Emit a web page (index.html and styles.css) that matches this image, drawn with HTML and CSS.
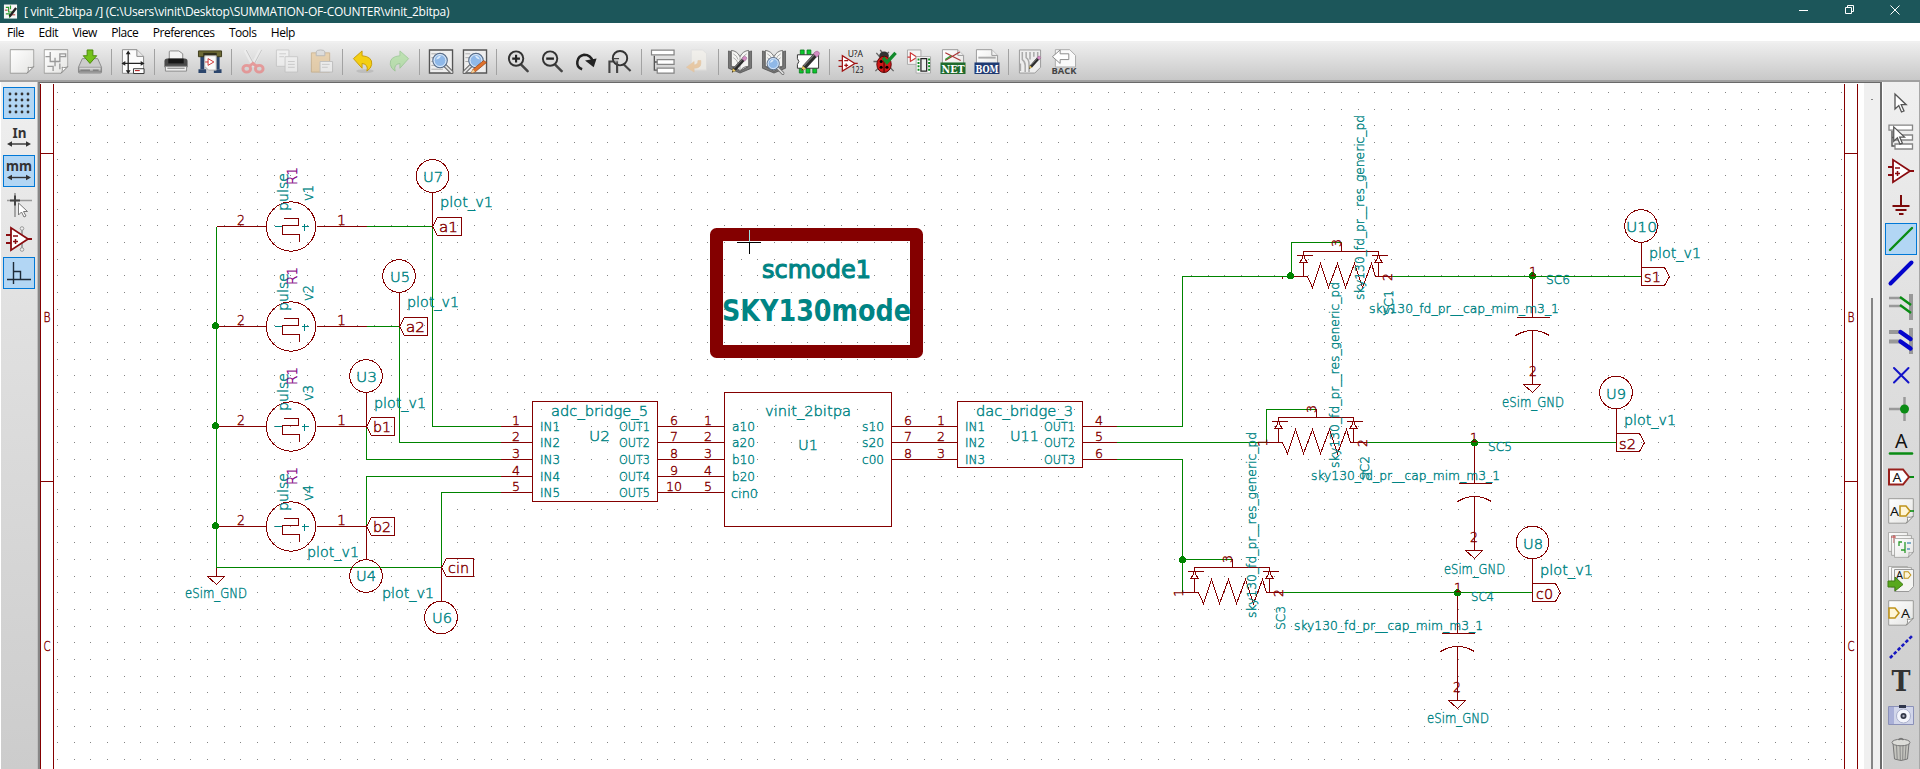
FILE: index.html
```html
<!DOCTYPE html>
<html lang="en">
<head>
<meta charset="utf-8">
<title>vinit_2bitpa</title>
<link rel="stylesheet" href="styles.css">
</head>
<body>
<svg class="defs" aria-hidden="true">
  <defs>
    <linearGradient id="paper" x1="0" y1="0" x2="1" y2="1"><stop offset="0" stop-color="#fff"/><stop offset="1" stop-color="#e4e4e2"/></linearGradient>
    <linearGradient id="metal" x1="0" y1="0" x2="0" y2="1"><stop offset="0" stop-color="#eee"/><stop offset="1" stop-color="#8c8c8c"/></linearGradient>
    <symbol id="page" viewBox="0 0 26 26"><path d="M.7.7h24.6v17.5l-7 7H.7z" fill="url(#paper)" stroke="#9a9a98"/><path d="M18.3 25.2c1.5-2 1.500-4 1-6.200 2 .6 4 .4 6-.8z" fill="#fff" stroke="#8c8c8a"/></symbol>
    <symbol id="sheet" viewBox="0 0 26 26"><path d="M2 .7h16l6 6v18.600H2z" fill="url(#paper)" stroke="#999"/><path d="M18 .7v6h6" fill="#eee" stroke="#999"/></symbol>
    <symbol id="pencil" viewBox="0 0 26 26"><path d="M3.500 24.500l1.500-6L20 2l4 3.500L9 22z" fill="#2d2d2d"/><path d="M6.500 18.500L20 4" stroke="#777" stroke-width="1.500"/><path d="M3.500 24.500l1.500-6 4 3.500z" fill="#e8c65c"/><path d="M3.500 24.500l.8-2.500 1.500 1.400z" fill="#222"/><path d="M17.800 4.500L20 2q2-1.500 4 .5t-.5 4l-2 2z" fill="#d48cc4" stroke="#96648c" stroke-width=".6"/></symbol>
    <symbol id="lens" viewBox="0 0 26 26"><path d="M17 17l7 7" stroke="#666" stroke-width="4" stroke-linecap="round"/><path d="M17 17l7 7" stroke="#ddd" stroke-width="2" stroke-linecap="round"/><circle cx="12" cy="12" r="7.500" fill="#8fb8e8" stroke="#5b6e88" stroke-width="1.200"/><circle cx="12" cy="12" r="6.200" fill="none" stroke="#e7f0fa"/><path d="M8 11q1-4 5-4-1 3-5 4z" fill="#dcebfb"/></symbol>
    <symbol id="opamp" viewBox="0 0 26 26"><g stroke="#8a0c10" stroke-width="1.800" fill="none"><path d="M0 9h5M0 17h5M21 13h5"/><path d="M5 1.800v22.400L22 13z" fill="#fff"/><path d="M7 10h5M7 15.500h5M9.500 13v5" stroke-width="1.500"/></g></symbol>
    <symbol id="book" viewBox="0 0 26 26"><path d="M1 2v18l12 5 12-5V2l-3 1v15l-9 5-9-5V3z" fill="#777" stroke="#444" stroke-width=".7"/><path d="M4 1.500Q10 2 13 8q3-6 9-6.500v16.500Q16 18 13 23q-3-5-9-5z" fill="#f4f4f2" stroke="#555" stroke-width=".8"/><path d="M13 8v15M6 5q4 2 5 6M6 9q4 2 5 6M20 5q-4 2-5 6M20 9q-4 2-5 6" fill="none" stroke="#999" stroke-width=".8"/></symbol>
    <symbol id="tree" viewBox="0 0 26 26"><path d="M4 7v15h5M4 13.500h5" fill="none" stroke="#555" stroke-width="1.400"/><g fill="#fff" stroke="#858585" stroke-width="1.300"><path d="M1 1.200h23.500v5H1zM7 11h17.500v5H7zM7 20h17.500v5H7z"/></g></symbol>
    <symbol id="arrow" viewBox="0 0 26 26"><path d="M7 4v15l3.800-3.500 2.700 6.500 2.500-1-2.800-6.300h5z" fill="#fff" stroke="#555" stroke-width="1.300"/></symbol>
    <symbol id="tag" viewBox="0 0 12 12"><path d="M1 1h6l4 5-4 5H1z" fill="#fff6d8" stroke="#c0941c" stroke-width="1.600"/></symbol>
  </defs>
</svg>
<header class="titlebar">
  <svg class="app-icon" viewBox="0 0 16 16"><path d="M1 0h14v15H1z" fill="#f6f6f6"/><path d="M3 3h3v5h4M8 1v4M3 10h4v4" stroke="#2a9a2a" stroke-width="1.200" fill="none"/><path d="M2 6h3M9 11h4" stroke="#a22"/><path d="M6 12L13 3l2 1.500-7 9z" fill="#222"/></svg>
  <span class="title">[ vinit_2bitpa /] (C:\Users\vinit\Desktop\SUMMATION-OF-COUNTER\vinit_2bitpa)</span>
  <svg class="controls" viewBox="0 0 138 23"><g fill="none" stroke="#fff"><path d="M16 10.500h9"/><path d="M62.500 7.500h6v6h-6zM64.500 7.500v-2h6v6h-2"/><path d="M107.500 5.500l9 9M116.500 5.500l-9 9"/></g></svg>
</header>
<nav class="menu"><span>File</span><span>Edit</span><span>View</span><span>Place</span><span>Preferences</span><span>Tools</span><span>Help</span></nav>
<div class="toolbar">
  <svg class="ico" viewBox="0 0 26 26"><use href="#page"/></svg>
  <svg class="ico" viewBox="0 0 26 26"><use href="#page"/><path d="M2 8h5v5h5M7 3v5M12 9v9M12 13h5v-5M17 8h6v-3h-6zM4 18h6v5M17 15v6" fill="none" stroke="#999" stroke-width="1.400"/></svg>
  <svg class="ico" viewBox="0 0 26 26"><path d="M5 10h16l4 9v5q0 1-1 1H2q-1 0-1-1v-5z" fill="#ccc" stroke="#8a8a8a"/><path d="M1.500 19h23v5h-23z" fill="url(#metal)" stroke="#808080" stroke-width=".7"/><path d="M3 22h10M16 22h6" stroke="#666"/><path d="M10 1h6v6h4l-7 8-7-8h4z" fill="#73c21a" stroke="#4c8a0a"/></svg>
  <i class="sep"></i>
  <svg class="ico" viewBox="0 0 26 26"><path d="M2 .7h15l7 7v17.600H2z" fill="#fcfcfc" stroke="#888"/><path d="M17 .7v7h7" fill="#e8e8e8" stroke="#888"/><path d="M8 4v20M3 15h20" stroke="#222" stroke-width="1.300"/><path d="M8 1.500l2.500 4h-5zM8 26l2.500-4h-5zM1 15l4-2.500v5zM25 15l-4-2.500v5z" fill="#222"/><path d="M13.500 20.500h11v5h-11z" fill="#fff" stroke="#333"/><path d="M15 22.500h5" stroke="#a00"/></svg>
  <i class="sep"></i>
  <svg class="ico" viewBox="0 0 26 26"><path d="M6 11V3q0-1 1-1h9l4 3v6z" fill="#f2f2f2" stroke="#888"/><path d="M4 10h18q3 0 3 3v6H1v-6q0-3 3-3z" fill="#4a4a4a"/><path d="M5 10h16v5H5z" fill="#171717"/><path d="M2 18h22v5H2z" fill="#eee" stroke="#888"/><path d="M4 20h18" stroke="#777"/></svg>
  <svg class="ico" viewBox="0 0 26 26"><path d="M3 7h4v14H3zM19 7h4v14h-4z" fill="#2b456c"/><path d="M1 21h8v4H1zM17 21h8v4h-8z" fill="#2b456c"/><path d="M1 2h24v6H1z" fill="#6d6a35" stroke="#3d3b1c"/><path d="M6 4h14v4H6z" fill="#302f1c"/><path d="M7.500 7h12v15h-8l-4-4z" fill="#fafafa" stroke="#aaa"/><path d="M11 10v7l6-3.500zM8 13.500h3" fill="#fff" stroke="#c33"/></svg>
  <i class="sep"></i>
  <svg class="ico dim" viewBox="0 0 26 26"><path d="M5 1l9 17M21 1l-9 17" stroke="#f4f4f4" stroke-width="4"/><path d="M6 1l9 17M22 1l-9 17" stroke="#aaa" stroke-width="1"/><g fill="none" stroke="#f06a6a" stroke-width="3"><ellipse cx="6.500" cy="20.500" rx="4" ry="3.500"/><ellipse cx="19.500" cy="20.500" rx="4" ry="3.500"/><path d="M9 18l4-3 4 3"/></g></svg>
  <svg class="ico dim" viewBox="0 0 26 26"><g fill="#fafafa" stroke="#b8b8b8"><path d="M2 1h13v17H2z"/><path d="M11 8h13v16H11z"/></g><path d="M5 5h7M5 8h5M14 13h7M14 16h7M14 19h7" stroke="#bbb"/></svg>
  <svg class="ico dim" viewBox="0 0 26 26"><path d="M3 4h19v20H3z" fill="#ecc488" stroke="#bd965c"/><path d="M8 3q0-2 4.500-2T17 3v4H8z" fill="#d8d8d8" stroke="#999"/><path d="M12 13h13v11H12z" fill="#fafafa" stroke="#aaa"/><path d="M14 16h8M14 19h6" stroke="#bbb"/></svg>
  <i class="sep"></i>
  <svg class="ico" viewBox="0 0 26 26"><ellipse cx="14" cy="23" rx="9" ry="2" fill="#aaa" opacity=".5"/><path d="M2 10l9-8v5q11 1 10 9-.5 4-5 7 2-7-5-8v5z" fill="#f4cf12" stroke="#c79c08"/></svg>
  <svg class="ico dim" viewBox="0 0 26 26"><path d="M24 10l-9-8v5Q4 8 5 16q.5 4 5 7-2-7 5-8v5z" fill="#9fe08b" stroke="#74bb68"/></svg>
  <i class="sep"></i>
  <svg class="ico" viewBox="0 0 26 26"><path d="M1 1h24v24H1z" fill="#eee" stroke="#555" stroke-width="1.400"/><path d="M3 5h5M3 9h4M3 13h4M3 17h5M3 21h12" stroke="#aaa"/><use href="#lens"/></svg>
  <svg class="ico" viewBox="0 0 26 26"><path d="M1 1h24v24H1z" fill="#eee" stroke="#555" stroke-width="1.400"/><path d="M3 5h5M3 9h4M3 13h4" stroke="#aaa"/><g transform="matrix(-1 0 0 1 26 0)"><use href="#lens"/></g><path d="M9 25l2-4L22 12l3 2-12 10z" fill="#e0722c" stroke="#8d3c10" stroke-width=".7"/><path d="M9 25l2-4 2 3z" fill="#f0d9a0"/></svg>
  <i class="sep"></i>
  <svg class="ico" viewBox="0 0 26 26"><path d="M15 15l8 8" stroke="#444" stroke-width="2.600" stroke-linecap="round"/><circle cx="11" cy="10" r="7.500" fill="#ddd" stroke="#333" stroke-width="2"/><path d="M7 10h8M11 6v8" stroke="#222" stroke-width="2.200"/></svg>
  <svg class="ico" viewBox="0 0 26 26"><path d="M15 15l8 8" stroke="#444" stroke-width="2.600" stroke-linecap="round"/><circle cx="11" cy="10" r="7.500" fill="#ddd" stroke="#333" stroke-width="2"/><path d="M7 10h8" stroke="#222" stroke-width="2.400"/></svg>
  <svg class="ico" viewBox="0 0 26 26"><path d="M9 21Q3 19 4 13t7-7q7 0 9 7" fill="none" stroke="#222" stroke-width="2.600"/><path d="M12 12l12-2-3 9z" fill="#222"/></svg>
  <svg class="ico" viewBox="0 0 26 26"><path d="M2 25V13h8v12M17 16l7 7" stroke="#444" stroke-width="2.200" fill="none"/><circle cx="13" cy="9.500" r="7.500" fill="#ddd" fill-opacity=".6" stroke="#333" stroke-width="2"/><path d="M10 13v10M6 10h6" stroke="#444" stroke-width="1.500"/></svg>
  <i class="sep"></i>
  <svg class="ico" viewBox="0 0 26 26"><use href="#tree"/></svg>
  <svg class="ico dim" viewBox="0 0 26 26"><path d="M7 1h12l4 4v17H7z" fill="#fbf8f0" stroke="#ddd"/><path d="M17 12v3q0 5-7 5v4l-8-5 8-6v3.500q4 0 4-4.500z" fill="#f5bd7c" stroke="#e8b880" stroke-width=".6"/></svg>
  <i class="sep"></i>
  <svg class="ico" viewBox="0 0 26 26"><use href="#book"/><use href="#pencil" x="2" y="6" width="19" height="20"/></svg>
  <svg class="ico" viewBox="0 0 26 26"><use href="#book"/><use href="#lens" x="2" y="5" width="22" height="22"/></svg>
  <svg class="ico" viewBox="0 0 26 26"><path d="M5 1h4v6H5zM12 1h4v6h-4zM4 19h4v6H4zM11 19h4v6h-4zM18 19h4v6h-4z" fill="#0cc52c" stroke="#087a1c" stroke-width=".8"/><path d="M2 6h22v14H2v-4q3-3 0-6z" fill="#fff" stroke="#333"/><use href="#pencil" x="3" y="0" width="23" height="25"/></svg>
  <i class="sep"></i>
  <svg class="ico" viewBox="0 0 26 26"><g fill="none" stroke="#a11414" stroke-width="1.300"><path d="M0 12h4M0 18h4M17 15h3"/><path d="M4 7v16l13-8z" fill="#fff"/><path d="M6 12h4M6 17h4M8 15v4"/></g><text class="ann" x="9.500" y="8.500" textLength="16" lengthAdjust="spacingAndGlyphs">U?A</text><text class="ann" x="13.500" y="25" textLength="12.500" lengthAdjust="spacingAndGlyphs">123</text></svg>
  <svg class="ico" viewBox="0 0 26 26"><path d="M4 4l5 6M1 13h7M3 23l5-5M17 3l-4 5M22 23l-5-5M8 1l3 4" stroke="#666" stroke-width="1.400"/><ellipse cx="12" cy="7" rx="5" ry="4.500" fill="#333"/><ellipse cx="12" cy="16" rx="7.500" ry="8.500" fill="#d01818" stroke="#5c0606"/><path d="M12 8v16" stroke="#300"/><circle cx="9" cy="13" r="1.600"/><circle cx="15" cy="19" r="1.600"/><circle cx="9" cy="19" r="1.600"/><path d="M11 9l4 5 9-10" fill="none" stroke="#138a2c" stroke-width="3.500"/></svg>
  <svg class="ico" viewBox="0 0 26 26"><path d="M1 1h14v15H1z" fill="#f4f4f4" stroke="#aaa"/><path d="M4 4v9l7-4.500zM1 8.500h3M11 8.500h4" fill="#fff" stroke="#c33" stroke-width="1.200"/><path d="M10 8h15v17H10z" fill="#fff" stroke="#aaa"/><path d="M15 10h6v13h-6z" fill="#eee" stroke="#222" stroke-width="1.300"/><path d="M12.500 10v13M23.500 10v13" stroke="#0a8a1c" stroke-width="2" stroke-dasharray="2 1.500"/></svg>
  <svg class="ico" viewBox="0 0 26 26"><use href="#sheet"/><path d="M5 4l16 8M5 12l15-9" stroke="#a33" stroke-width="1.200"/><path d="M5 11l6-4" stroke="#393" stroke-width="1.500"/><path d="M0 14h26v12H0z" fill="#1f6a2c"/><text class="tile" x="1" y="24.500" textLength="24" lengthAdjust="spacingAndGlyphs">NET</text></svg>
  <svg class="ico" viewBox="0 0 26 26"><use href="#sheet"/><path d="M4 9h18" stroke="#aaa" stroke-width="2"/><path d="M0 14h26v12H0z" fill="#1f3a72"/><text class="tile" x="1" y="24.500" textLength="24" lengthAdjust="spacingAndGlyphs">BOM</text></svg>
  <i class="sep"></i>
  <svg class="ico" viewBox="0 0 26 26"><path d="M2 1h22v18l-6 6H2z" fill="#eee" stroke="#999"/><path d="M5 3v8q3 2 3 6v7M9 3v6q3 2 3 7v8M3 15v8M13 3v8M17 3v5M21 3v5" fill="none" stroke="#aaa" stroke-width="1.600"/><use href="#pencil" x="10" y="5" width="15" height="18"/></svg>
  <svg class="ico" viewBox="0 0 26 26"><path d="M4 .7h15l6 6v12H4z" fill="#fafafa" stroke="#aaa"/><path d="M1 8l8-7v4h9v6H9v4z" fill="#fff" stroke="#888"/><text class="back" x="0" y="26" textLength="26" lengthAdjust="spacingAndGlyphs">BACK</text></svg>
</div>
<div class="work">
  <aside class="side left">
    <svg class="btn on" viewBox="0 0 26 26"><path d="M4 4h0M10 4h0M16 4h0M22 4h0M4 10h0M10 10h0M16 10h0M22 10h0M4 16h0M10 16h0M16 16h0M22 16h0M4 22h0M10 22h0M16 22h0M22 22h0" stroke="#333" stroke-width="2.800" stroke-linecap="round"/></svg>
    <svg class="btn" viewBox="0 0 26 26"><text class="unit" x="6.500" y="14" textLength="14" lengthAdjust="spacingAndGlyphs">In</text><path d="M3 20h20" stroke="#333" stroke-width="1.400"/><path d="M1 20l5-2.700v5.400zM25 20l-5-2.700v5.400z" fill="#333"/></svg>
    <svg class="btn on" viewBox="0 0 26 26"><text class="unit" x="0" y="12.500" textLength="26" lengthAdjust="spacingAndGlyphs">mm</text><path d="M3 19.500h20" stroke="#333" stroke-width="1.400"/><path d="M1 19.500l5-2.700v5.400zM25 19.500l-5-2.700v5.400z" fill="#333"/></svg>
    <svg class="btn" viewBox="0 0 26 26"><path d="M1 8.500h25M9 1v24" stroke="#999" stroke-width="1.700"/><path d="M4 8.500h10M9 3.500v10" stroke="#444" stroke-width="2"/><path d="M12.500 11v12l3-3 2.500 5 2-1-2.500-4.500h4z" fill="#fff" stroke="#777"/></svg>
    <svg class="btn" viewBox="0 0 26 26"><path d="M16 3v20" stroke="#999" stroke-width="1.800"/><circle cx="16" cy="2.500" r="1.800" fill="#eee" stroke="#999"/><circle cx="16" cy="23.500" r="1.800" fill="#eee" stroke="#999"/><use href="#opamp"/></svg>
    <svg class="btn on" viewBox="0 0 26 26"><path d="M7.500 2v22M1 19.500h24M7.500 11.500h7v8" fill="none" stroke="#1e2b38" stroke-width="1.400"/></svg>
  </aside>
  <main class="canvas">
    <svg id="schematic" class="sheet" viewBox="40 83 1824 686">
      <defs>
        <g id="source"><circle cx="-.5" r="24.700"/><path d="M-75 0h50M25 0h50M-8-7l1-1H7V-1H-9V8H8V15"/><path class="teal" d="M-17 0h7M10 0h7M13-3v7"/></g>
        <g id="ground"><path d="M-9 0H8L0 8z"/></g>
        <g id="resistor"><path d="M0 0h16l5 11 8-24 8 24 9-24 8 24 9-24 8 24 9-24 4 13h16M12 0v-14M12-21v-4h75v4M87-14V0M50-25v-9M5-21h16M80-21h16M8-14h8l-3-4v-3h-2v3zM83-14h8l-3-4v-3h-2v3z"/></g>
        <g id="capacitor"><path d="M0 0v41M-16 41h33M-17 59Q0 49 17 59M0 54v54"/><use href="#ground" y="108"/></g>
      </defs>
      <path id="grid" class="dots"/>
      <g class="lines" transform="translate(.5 .5)">
        <path d="M40 83v686M53 83v686M40 153h13M40 481h13M1844 83v686M1857 83v686M1844 153h13M1844 481h13"/>
        <g class="wire">
          <path d="M216 226v341h225M366 226h66v200h68M366 326h33v116h101M366 426v33h134M366 526v-50h134M441 567v-75h59"/>
          <path d="M1116 426h66V276h109v-34h50M1116 442h150v-33h50M1116 459h66v133M1182 559h50M1391 276h250M1366 442h250M1282 592h250"/>
        </g>
        <use href="#source" x="291" y="226"/><use href="#source" x="291" y="326"/><use href="#source" x="291" y="426"/><use href="#source" x="291" y="526"/>
        <path d="M216 567v9"/><use href="#ground" x="216" y="576"/>
        <g>
          <circle cx="432" cy="175.500" r="16.300"/><circle cx="398.500" cy="275.500" r="16.300"/><circle cx="365.500" cy="375.500" r="16.300"/><circle cx="365.500" cy="575.500" r="16.300"/><circle cx="440.500" cy="617" r="16.300"/>
          <circle cx="1640.500" cy="225.500" r="16.300"/><circle cx="1615.500" cy="392" r="16.300"/><circle cx="1532" cy="542" r="16.300"/>
          <path d="M432 192v34M399 292v34M366 392v34M366 526v33M441 567v34M1641 242v25M1616 408v25M1532 558v25"/>
          <path d="M432 226l5-9h24v18h-24zM399 326l5-9h23v18h-23zM366 426l5-9h23v18h-23zM366 526l5-9h23v18h-23zM441 567l5-9h27v18h-27z"/>
          <path d="M1641 267h23l5 9-5 9h-23zM1616 433h23l5 9-5 9h-23zM1532 583h23l5 9-5 9h-23z"/>
        </g>
        <path d="M532 401h125v100H532zM724 392h167v134H724zM957 401h125v66H957z"/>
        <path d="M500 426h32M500 442h32M500 459h32M500 476h32M500 492h32M657 426h67M657 442h67M657 459h67M657 476h67M657 492h67M891 426h66M891 442h66M891 459h66M1082 426h34M1082 442h34M1082 459h34"/>
        <use href="#resistor" x="1291" y="276"/><use href="#resistor" x="1266" y="442"/><use href="#resistor" x="1182" y="592"/>
        <path d="M1282 276v2"/>
        <use href="#capacitor" x="1532" y="276"/><use href="#capacitor" x="1474" y="442"/><use href="#capacitor" x="1457" y="592"/>
        <g class="dot"><circle cx="215" cy="325" r="3.500"/><circle cx="215" cy="425" r="3.500"/><circle cx="215" cy="525" r="3.500"/><circle cx="1290" cy="275" r="3.500"/><circle cx="1532" cy="275" r="3.500"/><circle cx="1474" cy="442" r="3.500"/><circle cx="1457" cy="592" r="3.500"/><circle cx="1182" cy="559" r="3.500"/></g>
      </g>
      <rect class="frame" x="716.500" y="234.500" width="200" height="117"/>
      <g class="lines"><path class="cursor" d="M737 242.500h24M749.500 243v11"/><path class="cursor-inv" d="M749.500 230v12"/></g>
      <g id="labels"></g>
    </svg>
    <div class="scroll"><i class="scroll-cap"></i><i class="thumb"></i></div>
  </main>
  <aside class="side right">
    <svg class="btn" viewBox="0 0 26 26"><use href="#arrow"/></svg>
    <svg class="btn" viewBox="0 0 26 26"><use href="#tree"/><use href="#arrow" y="-1" x="-1" width="25" height="25"/></svg>
    <svg class="btn" viewBox="0 0 26 26"><use href="#opamp"/></svg>
    <svg class="btn" viewBox="0 0 26 26"><path d="M13 3v11M4.500 14h17M7.500 18h11M11 22h4.500" stroke="#7c0a0a" stroke-width="2"/></svg>
    <svg class="btn on" viewBox="0 0 26 26"><path d="M2 24L24 2" stroke="#0a8c14" stroke-width="2.400" stroke-linecap="round"/></svg>
    <svg class="btn" viewBox="0 0 26 26"><path d="M2.500 23.500l21-21" stroke="#0404cc" stroke-width="4" stroke-linecap="round"/></svg>
    <svg class="btn" viewBox="0 0 26 26"><path d="M23 0v26" stroke="#999" stroke-width="4"/><path d="M1 4h12M1 12h12" stroke="#999" stroke-width="2.500"/><path d="M12 3l11 8M12 11l11 8" stroke="#0a8c14" stroke-width="2.400"/></svg>
    <svg class="btn" viewBox="0 0 26 26"><path d="M23 0v26" stroke="#999" stroke-width="4"/><path d="M1 4h12M1 13.500h12" stroke="#999" stroke-width="4"/><path d="M12.500 4l10 7M12.500 13.500l10 7" stroke="#0404cc" stroke-width="4.400" stroke-linecap="round"/></svg>
    <svg class="btn" viewBox="0 0 26 26"><path d="M6 6l14.500 14.500M20.500 6L6 20.500" stroke="#1414c8" stroke-width="2" stroke-linecap="round"/></svg>
    <svg class="btn" viewBox="0 0 26 26"><path d="M1 13h15M16.500 1v24" stroke="#999" stroke-width="2.500"/><circle cx="16.500" cy="13" r="4.500" fill="#0a8c14"/></svg>
    <svg class="btn" viewBox="0 0 26 26"><text class="glyph" x="7" y="17.500" textLength="12.500" lengthAdjust="spacingAndGlyphs">A</text><path d="M2 23.500h22" stroke="#0a8c14" stroke-width="2.600" stroke-linecap="round"/></svg>
    <svg class="btn" viewBox="0 0 26 26"><path d="M20 13h6" stroke="#0a8c14" stroke-width="2"/><path d="M1 5.500h14l6 7.500-6 7.500H1z" fill="#fff" stroke="#98201c" stroke-width="2"/><text class="glyph small" x="4.500" y="18" textLength="9" lengthAdjust="spacingAndGlyphs">A</text></svg>
    <svg class="btn" viewBox="0 0 26 26"><use href="#page"/><text class="glyph small" x="2" y="17.500" textLength="9" lengthAdjust="spacingAndGlyphs">A</text><use href="#tag" x="11" y="7" width="12" height="12"/><path d="M22 13h4" stroke="#0a8c14" stroke-width="1.600"/></svg>
    <svg class="btn" viewBox="0 0 26 26"><use href="#page" width="20" height="20"/><use href="#page" x="3" y="3" width="21" height="21"/><path d="M6 3v8M3 5h5" stroke="#b44"/><use href="#page" x="6" y="6" width="20" height="20"/><path d="M14 10h-3v4M17 10v8M13 18h4v3" fill="none" stroke="#2a9a2a" stroke-width="1.300"/><path d="M19 11h4M19 17h3" stroke="#5a96ba" stroke-width="1.300"/></svg>
    <svg class="btn" viewBox="0 0 26 26"><use href="#page" width="20" height="20"/><use href="#page" x="3" y="1" width="21" height="21"/><path d="M6.500 3.500h19v17l-4.500 5H6.500z" fill="#f4f4f2" stroke="#999"/><text class="glyph tiny" x="8" y="13" textLength="7" lengthAdjust="spacingAndGlyphs">A</text><use href="#tag" x="15" y="5" width="9" height="8"/><path d="M0 15h7v-4l8 7.500L7 25v-4H0z" fill="#58a81c" stroke="#3f7c12"/></svg>
    <svg class="btn" viewBox="0 0 26 26"><use href="#page"/><use href="#tag" x="0" y="7" width="12" height="12"/><text class="glyph small" x="13" y="17.500" textLength="9" lengthAdjust="spacingAndGlyphs">A</text></svg>
    <svg class="btn" viewBox="0 0 26 26"><path d="M2 24L24.500 1.500" stroke="#1818c0" stroke-width="2.600" stroke-dasharray="3.500 2"/></svg>
    <svg class="btn" viewBox="0 0 26 26"><text class="serif" x="3.500" y="23" textLength="19" lengthAdjust="spacingAndGlyphs">T</text></svg>
    <svg class="btn" viewBox="0 0 26 26"><path d="M.5 4.500h25v18H.5z" fill="#d2d6ea" stroke="#8a90b8"/><path d="M1 5h5v17H1z" fill="#aab0d8"/><path d="M11 3h7v3h-7z" fill="#30364c"/><circle cx="15.500" cy="14" r="7" fill="#f4f5fc" stroke="#aab0cc"/><circle cx="15.500" cy="14" r="3" fill="#333848"/><circle cx="15.500" cy="14" r="1.200" fill="#aab"/></svg>
    <svg class="btn" viewBox="0 0 26 26"><path d="M5 7h16l-1.500 16q-6.500 3-13 0z" fill="#c4c4be" stroke="#777"/><path d="M8.500 9l.7 14M12 9l.3 15M15 9l-.3 15M18 9l-.9 14" stroke="#888"/><ellipse cx="13" cy="6.500" rx="9" ry="3.300" fill="#dcdcd8" stroke="#777"/><path d="M10.500 4q2.500-3 5 0" fill="none" stroke="#777" stroke-width="1.500"/></svg>
  </aside>
</div>
<script src="schematic.js"></script>
</body>
</html>
```

FILE: styles.css
```css
* { box-sizing: border-box; }
body {
  margin: 0;
  width: 1920px;
  height: 769px;
  overflow: hidden;
  display: flex;
  flex-direction: column;
  background: #fff;
  font-family: "Open Sans", "Noto Sans", sans-serif;
  font-size: 12px;
}
.defs { width: 0; height: 0; flex: none; margin: 0; display: block; }
.titlebar {
  flex: none;
  height: 23px;
  display: flex;
  align-items: center;
  background: #1c565a;
  color: #fff;
}
.app-icon { width: 15px; height: 16px; margin-left: 3px; }
.title { margin-left: 6px; font-size: 12px; letter-spacing: -0.24px; white-space: pre; }
.controls { width: 138px; height: 23px; margin-left: auto; margin-right: -1px; }
.menu {
  flex: none;
  height: 18px;
  display: flex;
  align-items: center;
  gap: 14.4px;
  padding-left: 7px;
  color: #000;
  letter-spacing: -0.46px;
}
.toolbar {
  flex: none;
  height: 41px;
  display: flex;
  align-items: center;
  padding: 0 5px 0;
  border-top: 2px solid #f0f0f0;
  border-bottom: 2px solid #a0a0a0;
  background: linear-gradient(#eeeeee, #c8c8c8);
}
.ico { width: 26px; height: 25px; margin: 0 4px; flex: none; overflow: visible; }
.dim { opacity: .55; }
.sep { width: 1px; height: 26px; margin: 0 4px; background: #a2a2a2; flex: none; }
.work { flex: 1; min-height: 0; display: flex; }
.side {
  flex: none;
  width: 38px;
  display: flex;
  flex-direction: column;
  align-items: center;
  gap: 2px;
  padding-top: 5px;
  background: linear-gradient(#f0f0f0, #e0e0e0 35%, #cccccc);
}
.left { border-left: 1px solid #fff; border-right: 1px solid #c0c0c0; }
.right { width: 38px; border-left: 1px solid #fff; border-right: 1px solid #a8a8a8; }
.btn { width: 32px; height: 32px; padding: 3px; flex: none; overflow: visible; }
.on { padding: 2px; border: 1px solid #0078d7; background: #b2d6f4; }
.canvas {
  flex: 1;
  min-width: 0;
  display: flex;
  border-left: 2px solid #878787;
  border-right: 2px solid #6b6b6b;
  border-top: 1px solid #696969;
  background: #fff;
}
.sheet { width: 1824px; height: 686px; flex: none; display: block; }
.scroll {
  width: 16px;
  flex: none;
  display: flex;
  flex-direction: column;
  align-items: center;
  background: #f0f0f0;
}
.scroll-cap { width: 2px; height: 1px; margin-top: 16px; background: #858585; }
.thumb { width: 2px; flex: 1; margin-top: 198px; background: #858585; }
.dots { fill: #848484; shape-rendering: crispEdges; }
.lines { fill: none; stroke: #840000; stroke-width: 1; shape-rendering: crispEdges; }
.wire { stroke: #008400; }
.dot { fill: #008400; stroke: none; }
.teal { stroke: #008484; }
.frame { fill: none; stroke: #840000; stroke-width: 13; stroke-linejoin: round; }
.cursor { stroke: #000; }
.cursor-inv { stroke: #9be0e0; }
.t {
  font-family: "DejaVu Sans", sans-serif;
  font-weight: 200;
  font-size: 13.5px;
  fill: #008484;
  stroke: #008484;
  stroke-width: .4px;
}
.t-red { fill: #840000; stroke: #840000; }
.t-mag { fill: #840084; stroke: #840084; }
.t-pin { font-size: 12.5px; }
.t-mid { font-weight: 400; font-size: 25px; stroke-width: 1.1px; }
.t-big { font-weight: 700; font-size: 31px; stroke-width: 0; }
.ann { font: 9.5px "Noto Sans", sans-serif; fill: #222; }
.tile { font: bold 12px "DejaVu Serif", serif; fill: #fff; }
.back { font: bold 9.5px "Open Sans", sans-serif; fill: #444; }
.unit { font: bold 15px "Noto Sans", sans-serif; fill: #333; }
.glyph { font: 19px "Noto Sans", sans-serif; fill: #111; }
.small { font-size: 13px; }
.tiny { font-size: 10px; }
.serif { font: bold 27px "DejaVu Serif", serif; fill: #333; }
```

FILE: schematic.js
```js
// Grid: one dot every 50 mil, snapped to whole pixels.
const PITCH = 16.675;
let dots = "";
for (let r = 0; r < 41; r++) {
  for (let c = 0; c < 108; c++) {
    dots += `M${Math.round(57 + c * PITCH)} ${Math.round(92 + r * PITCH)}h1v1h-1z`;
  }
}
document.getElementById("grid").setAttribute("d", dots);

// Horizontal text: [string, left, right, baseline, extra classes]
const across = [
  ["B", 43.5, 50.5, 321, "t-red"], ["C", 43.5, 50.5, 650, "t-red"],
  ["B", 1847.5, 1854.5, 321, "t-red"], ["C", 1847.5, 1854.5, 650, "t-red"],
  ["U7", 423, 443, 181], ["U5", 390, 410, 281], ["U3", 356, 377, 381],
  ["U4", 356, 376, 580], ["U6", 432, 452, 622],
  ["plot_v1", 440, 493, 206], ["plot_v1", 407, 459, 306], ["plot_v1", 374, 426, 407],
  ["plot_v1", 307, 359, 556], ["plot_v1", 382, 434, 597],
  ["a1", 439, 458, 231, "t-red"], ["a2", 406, 425, 331, "t-red"], ["b1", 373, 391, 431, "t-red"],
  ["b2", 373, 391, 531, "t-red"], ["cin", 448, 469, 572, "t-red"],
  ["eSim_GND", 185, 247, 597],
  ["adc_bridge_5", 551, 648, 415], ["U2", 589, 610, 440],
  ["vinit_2bitpa", 765, 851, 415], ["U1", 798, 818, 449],
  ["dac_bridge_3", 976, 1073, 415], ["U11", 1010, 1039, 440],
  ["cin0", 731, 758, 497, "t-pin"],
  ["U10", 1626, 1657, 231], ["U9", 1606, 1626, 398], ["U8", 1523, 1543, 548],
  ["plot_v1", 1649, 1701, 257], ["plot_v1", 1624, 1676, 424], ["plot_v1", 1540, 1593, 574],
  ["s1", 1644, 1661, 281, "t-red"], ["s2", 1619, 1636, 448, "t-red"], ["c0", 1536, 1553, 598, "t-red"],
  ["SC6", 1546, 1570, 283, "t-pin"], ["SC5", 1488, 1512, 450, "t-pin"], ["SC4", 1471, 1494, 600, "t-pin"],
  ["sky130_fd_pr__cap_mim_m3_1", 1369, 1559, 312, "t-pin"],
  ["sky130_fd_pr__cap_mim_m3_1", 1311, 1500, 479, "t-pin"],
  ["sky130_fd_pr__cap_mim_m3_1", 1294, 1483, 629, "t-pin"],
  ["eSim_GND", 1502, 1564, 406], ["eSim_GND", 1444, 1505, 573], ["eSim_GND", 1427, 1489, 722],
  ["1", 1529, 1537, 275, "t-red t-pin"], ["1", 1470, 1478, 441, "t-red t-pin"], ["1", 1454, 1462, 591, "t-red t-pin"],
  ["2", 1529, 1537, 375, "t-red"], ["2", 1470, 1478, 541, "t-red"], ["2", 1453, 1461, 691, "t-red"],
  ["scmode1", 762, 871, 277, "t-mid"], ["SKY130mode", 722, 911, 320, "t-big"]
];

// Vertical text, reading upwards: [string, bottom, top, baseline x, extra classes]
const upward = [
  ["sky130_fd_pr__res_generic_pd", 300, 115, 1363.5, "t-pin"],
  ["sky130_fd_pr__res_generic_pd", 468, 282, 1338.5, "t-pin"],
  ["sky130_fd_pr__res_generic_pd", 618, 432, 1255.5, "t-pin"],
  ["SC1", 315, 290, 1392, "t-pin"], ["SC2", 480, 456, 1368, "t-pin"], ["SC3", 630, 606, 1284, "t-pin"],
  ["1", 597, 589, 1182, "t-red t-pin"], ["1", 447, 438, 1266, "t-red t-pin"]
];
[[1291, 276], [1266, 442], [1182, 592]].forEach(([x, y]) => {
  upward.push(["2", y + 5, y - 3, x + 100, "t-red t-pin"], ["3", y - 29, y - 37, x + 49, "t-red t-pin"]);
});

for (let i = 0; i < 4; i++) {
  const y = 226 + i * 100;
  across.push(["2", 237, 245, y - 2, "t-red"], ["1", 337, 346, y - 2, "t-red"]);
  upward.push(["pulse", y - 15, y - 53, 287], ["R1", y - 41, y - 59, 296, "t-mag"], ["v" + (i + 1), y - 25, y - 41, 312]);
}

// Pin rows of the three blocks: names inside the outline, numbers above the pins
const ROWS = [426, 442, 459, 476, 492];
function block(x1, x2, left, right, leftNums, rightNums, inW, outW) {
  left.forEach((name, i) => {
    if (name) across.push([name, x1 + 8, x1 + 8 + inW, ROWS[i] + 4.5, "t-pin"]);
    across.push([leftNums[i], x1 - 20, x1 - 12, ROWS[i] - 2, "t-red t-pin"]);
  });
  right.forEach((name, i) => {
    const w = rightNums[i].length * 8;
    across.push([name, x2 - 7 - outW, x2 - 7, ROWS[i] + 4.5, "t-pin"]);
    across.push([rightNums[i], x2 + 17 - w / 2, x2 + 17 + w / 2, ROWS[i] - 2, "t-red t-pin"]);
  });
}
block(532, 657, ["IN1", "IN2", "IN3", "IN4", "IN5"], ["OUT1", "OUT2", "OUT3", "OUT4", "OUT5"],
  ["1", "2", "3", "4", "5"], ["6", "7", "8", "9", "10"], 20, 31);
block(724, 891, ["a10", "a20", "b10", "b20", ""], ["s10", "s20", "c00"],
  ["1", "2", "3", "4", "5"], ["6", "7", "8"], 23, 22);
block(957, 1082, ["IN1", "IN2", "IN3"], ["OUT1", "OUT2", "OUT3"],
  ["1", "2", "3"], ["4", "5", "6"], 20, 31);

const layer = document.getElementById("labels");
function put(str, length, transform, cls) {
  const el = document.createElementNS("http://www.w3.org/2000/svg", "text");
  el.textContent = str;
  el.setAttribute("class", "t " + (cls || ""));
  el.setAttribute("textLength", length);
  el.setAttribute("lengthAdjust", "spacingAndGlyphs");
  el.setAttribute("transform", transform);
  layer.appendChild(el);
}
across.forEach(([s, a, b, y, c]) => put(s, b - a, `translate(${a} ${y + 0.7})`, c));
upward.forEach(([s, a, b, x, c]) => put(s, a - b, `translate(${x + 0.5} ${a}) rotate(-90)`, c));
```
